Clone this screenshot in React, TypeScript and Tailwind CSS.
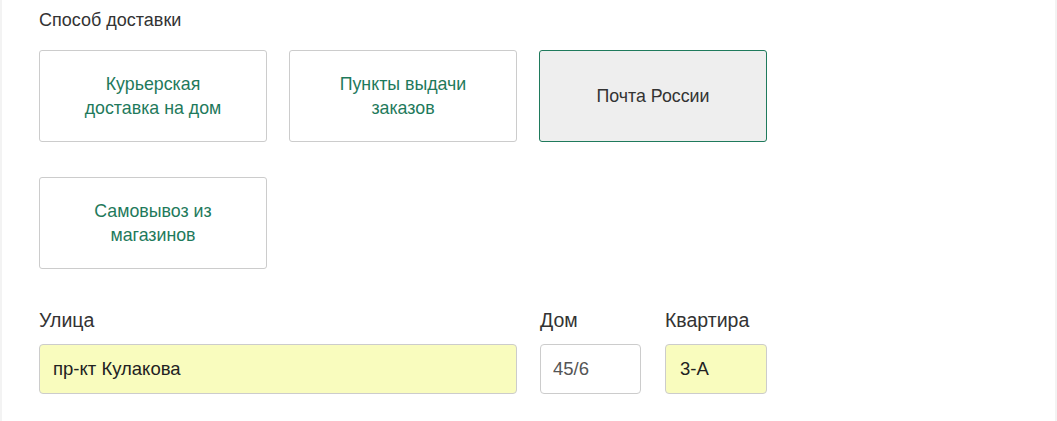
import { useState } from "react";

const options = [
  { id: "courier", label: "Курьерская доставка на дом" },
  { id: "pickup", label: "Пункты выдачи заказов" },
  { id: "post", label: "Почта России" },
  { id: "store", label: "Самовывоз из магазинов" },
];

export default function App() {
  const [selected, setSelected] = useState("post");
  const [street, setStreet] = useState("пр-кт Кулакова");
  const [house, setHouse] = useState("45/6");
  const [flat, setFlat] = useState("3-А");

  return (
    <div
      className="w-full h-[421px] bg-white border-x-2 border-[#f3f3f3] pl-[37px] pt-[8px]"
      style={{ fontFamily: '"Liberation Sans", Arial, sans-serif' }}
    >
      <h2 className="text-[18px] leading-[24px] text-[#333] mb-[18px]">Способ доставки</h2>

      {/* Delivery options */}
      <div className="grid grid-cols-[228px_228px_228px] gap-x-[22px] gap-y-[35px]">
        {options.map((o) => {
          const active = o.id === selected;
          return (
            <button
              key={o.id}
              onClick={() => setSelected(o.id)}
              className={
                active
                  ? "h-[92px] rounded-[3px] border border-[#1f7a5c] bg-[#eeeeee] text-[#333] text-[17.8px] leading-[24px] px-[30px] cursor-pointer"
                  : "h-[92px] rounded-[3px] border border-[#cccccc] bg-white text-[#1f7a5c] text-[17.8px] leading-[24px] px-[30px] cursor-pointer"
              }
            >
              {o.label}
            </button>
          );
        })}
      </div>

      {/* Address */}
      <div className="flex mt-[37px] gap-x-[23px]">
        <div className="flex flex-col w-[478px]">
          <label className="text-[19.5px] leading-[28px] text-[#333] mb-[10px]">Улица</label>
          <input
            className="h-[50px] rounded-[4px] border border-[#cccccc] bg-[#f9fcbe] px-[13px] text-[18.5px] text-[#222] outline-none"
            value={street}
            onChange={(e) => setStreet(e.target.value)}
          />
        </div>
        <div className="flex flex-col w-[101px]">
          <label className="text-[19.5px] leading-[28px] text-[#333] mb-[10px]">Дом</label>
          <input
            className="h-[50px] rounded-[4px] border border-[#cccccc] bg-white px-[12px] text-[18.5px] text-[#555] outline-none"
            value={house}
            onChange={(e) => setHouse(e.target.value)}
          />
        </div>
        <div className="flex flex-col w-[102px] ml-px">
          <label className="text-[19.5px] leading-[28px] text-[#333] mb-[10px]">Квартира</label>
          <input
            className="h-[50px] rounded-[4px] border border-[#cccccc] bg-[#f9fcbe] px-[14px] text-[18.5px] text-[#222] outline-none"
            value={flat}
            onChange={(e) => setFlat(e.target.value)}
          />
        </div>
      </div>
    </div>
  );
}
